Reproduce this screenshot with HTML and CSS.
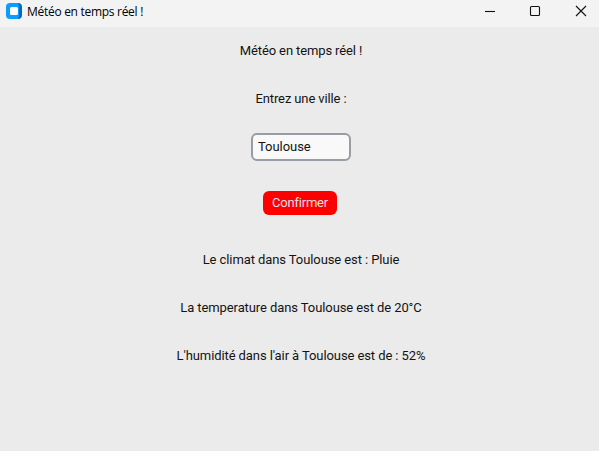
FILE: index.html
```html
<!DOCTYPE html>
<html lang="fr">
<head>
<meta charset="utf-8">
<title>Météo en temps réel !</title>
<link rel="stylesheet" href="styles.css">
</head>
<body>
<header class="titlebar">
  <svg class="logo" width="16" height="16" viewBox="0 0 16 16">
    <path d="M4 0h9v16H4a4 4 0 0 1-4-4V4a4 4 0 0 1 4-4z" fill="#0c9cfb"/>
    <path d="M12 0q4 0 4 4v8q0 4-4 4l1-3V3z" fill="#0869b8"/>
    <rect x="4" y="4" width="8" height="8" rx="1.5" fill="#fff"/>
  </svg>
  <span class="caption">Météo en temps réel !</span>
  <div class="controls">
    <svg width="46" height="27" viewBox="0 0 46 27"><path d="M18 11.5h10"/></svg>
    <svg width="46" height="27" viewBox="0 0 46 27"><rect x="17.5" y="6.5" width="9" height="9" rx="1"/></svg>
    <svg width="46" height="27" viewBox="0 0 46 27"><path d="M17 6l10 10M27 6l-10 10"/></svg>
  </div>
</header>
<main class="content">
  <h1 class="label">Météo en temps réel !</h1>
  <label class="label" for="city">Entrez une ville :</label>
  <input class="city" id="city" value="Toulouse">
  <button class="confirm">Confirmer</button>
  <p class="label result">Le climat dans Toulouse est : Pluie</p>
  <p class="label result">La temperature dans Toulouse est de 20°C</p>
  <p class="label result">L'humidité dans l'air à Toulouse est de : 52%</p>
</main>
</body>
</html>
```
FILE: styles.css
```css
* { box-sizing: border-box; }
body { margin: 0; height: 451px; overflow: hidden; background: #ebebeb; color: #141414; font: 13px/28px Roboto, sans-serif; letter-spacing: -0.12px; }
.titlebar { display: flex; align-items: center; height: 27px; padding-left: 6px; background: #f3f3f3; }
.logo { margin-bottom: 5px; }
.caption { margin: 0 auto 3px 5px; font: 12px/16px "Open Sans", sans-serif; letter-spacing: -0.29px; color: #000; }
.controls { display: flex; margin-right: -6px; }
.controls svg { fill: none; stroke: #111; stroke-width: 1.1; }
.content { display: flex; flex-direction: column; align-items: center; gap: 20px; padding: 10px 0 0 3px; }
.label { margin: 0; height: 28px; font: inherit; white-space: nowrap; }
.result { padding-top: 1px; letter-spacing: -0.09px; }
.city { width: 100px; height: 28px; padding: 0 5px 1px; border: 2px solid #979da2; border-radius: 6px; background: #f9f9fa; color: #141414; font: inherit; letter-spacing: -0.05px; line-height: 22px; }
.confirm { width: 74px; height: 24px; margin: 10px 2px 10px 0; padding: 0; border: 0; border-radius: 6px; background: #f00; color: #dce4ee; font: inherit; letter-spacing: -0.2px; line-height: 24px; }
```
